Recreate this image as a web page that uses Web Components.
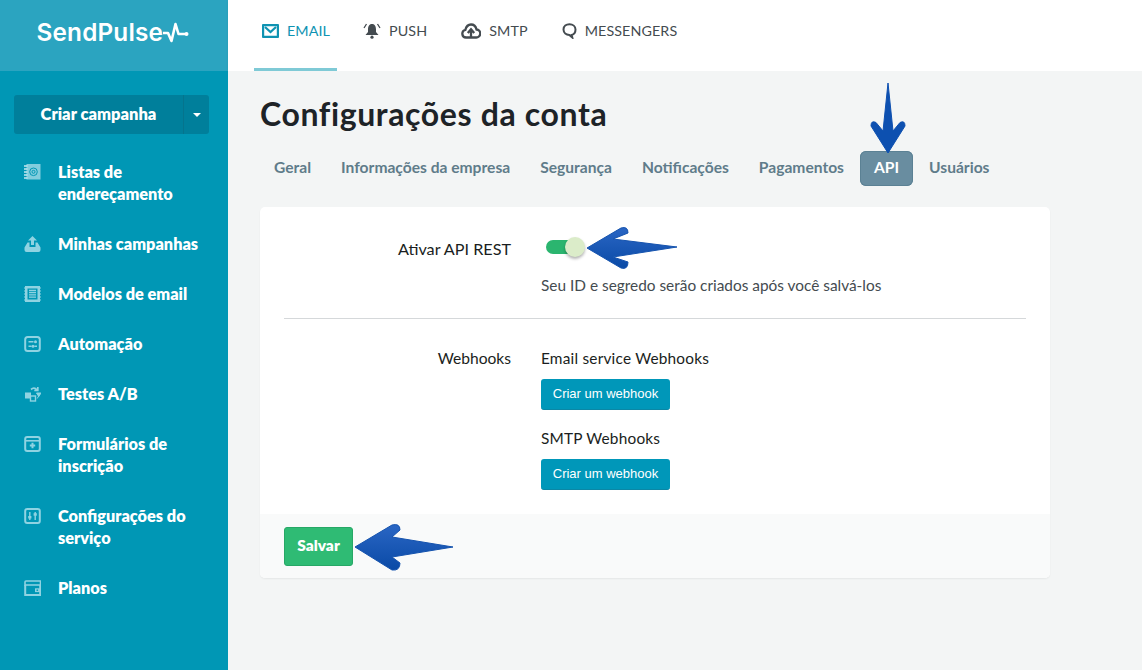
<!DOCTYPE html>
<html lang="pt"><head><meta charset="utf-8"><title>SendPulse</title>
<style>
html,body{margin:0;padding:0;height:100%}
body{font-family:Lato,"Open Sans",sans-serif;overflow:hidden;background:#f3f5f5}
app-shell{width:1142px;height:670px}
</style></head><body>
<app-shell>
  <side-bar slot="side">
    <nav-item label="Listas de endereçamento" icon="list"></nav-item>
    <nav-item label="Minhas campanhas" icon="camp"></nav-item>
    <nav-item label="Modelos de email" icon="tpl"></nav-item>
    <nav-item label="Automação" icon="auto"></nav-item>
    <nav-item label="Testes A/B" icon="ab"></nav-item>
    <nav-item label="Formulários de inscrição" icon="form"></nav-item>
    <nav-item label="Configurações do serviço" icon="conf"></nav-item>
    <nav-item label="Planos" icon="plan"></nav-item>
  </side-bar>
  <top-bar slot="top"></top-bar>
  <account-page slot="main"></account-page>
</app-shell>
<script>
const def=(n,html)=>customElements.define(n,class extends HTMLElement{
  constructor(){super();this.attachShadow({mode:'open'}).innerHTML=typeof html==='function'?html(this):html}
});
const C='#8fd3e2',B='#0097b5';
const ICONS={
 list:`<rect x="2.500" y="0" width="14" height="15.500" fill="#82cddd"/><path d="M0 2h3.500M0 5h3.500M0 8h3.500M0 11h3.500M0 14h3.500" stroke="#c4e8f0" stroke-width="1.300"/><circle cx="9.500" cy="7.800" r="3.800" fill="none" stroke="${B}" stroke-width="1"/><circle cx="9.500" cy="7.800" r="1.500" fill="none" stroke="${B}" stroke-width="1"/>`,
 camp:`<path d="M8.500 0l4.500 4.500h-3v4.500h-3v-4.500h-3z" fill="${C}"/><path d="M3.500 6.500h2v4.500h6v-4.500h2l3 5v2.500a2 2 0 0 1-2 2h-12a2 2 0 0 1-2-2v-2.500z" fill="${C}"/>`,
 tpl:`<rect x="1" y="0" width="15" height="16" fill="${C}"/><rect x="3.500" y="2.500" width="10" height="11" fill="${B}"/><path d="M5 4.500h7M5 6.700h7M5 8.900h7M5 11.100h7" stroke="${C}" stroke-width="1.300"/><path d="M0 2h2M0 5h2M0 8h2M0 11h2M0 14h2M15 2h2M15 5h2M15 8h2M15 11h2M15 14h2" stroke="${C}" stroke-width="1.100"/>`,
 auto:`<rect x="1.200" y="1" width="14.600" height="14" rx="2.500" fill="none" stroke="${C}" stroke-width="2"/><path d="M4.500 5.800h5M10.500 10.200h2.500M4.500 10.200h3" stroke="${C}" stroke-width="1.400"/><circle cx="11.500" cy="5.800" r="1.500" fill="${C}"/><circle cx="9" cy="10.200" r="1.500" fill="${C}"/>`,
 ab:`<rect x="1" y="6.500" width="6" height="6" fill="${C}"/><rect x="6.500" y="10" width="5" height="5" fill="${B}" stroke="${C}" stroke-width="1.400"/><path d="M7 3.500c2-1.800 4-1.800 6 .5M13.800 1v3.500h-3.500" fill="none" stroke="${C}" stroke-width="1.700"/><path d="M12.500 7h4.500l-2.250 3.500zM14.700 10l-1.500 2.500" fill="${C}" stroke="${C}"/>`,
 form:`<rect x="1.200" y="1" width="14.600" height="14" rx="2" fill="none" stroke="${C}" stroke-width="2"/><path d="M1.500 4.800h14" stroke="${C}" stroke-width="1.600"/><path d="M8.500 6.800v5.400M5.800 9.500h5.400" stroke="${C}" stroke-width="2"/>`,
 conf:`<rect x="1.200" y="1" width="14.600" height="14" rx="2" fill="none" stroke="${C}" stroke-width="2"/><path d="M5.800 4v8M11.200 4v8" stroke="${C}" stroke-width="1.400"/><rect x="4.200" y="8" width="3.200" height="2.500" fill="${C}"/><rect x="9.600" y="5.200" width="3.200" height="2.500" fill="${C}"/>`,
 plan:`<path d="M2 1h14.500v4h-15.500v-3a1 1 0 0 1 1-1z" fill="none" stroke="${C}" stroke-width="1.600"/><path d="M1.200 5v10h15v-10" fill="none" stroke="${C}" stroke-width="2"/><rect x="11" y="8.300" width="5.500" height="3.800" fill="${C}"/><rect x="12.500" y="9.500" width="1.600" height="1.400" fill="${B}"/>`
};
def('app-shell',`<style>:host{display:grid;grid-template-columns:228px 1fr;grid-template-rows:71px 1fr;position:relative;overflow:hidden}
 ::slotted([slot=side]){grid-row:1/3}</style>
 <slot name="side"></slot><slot name="top"></slot><slot name="main"></slot>`);
def('side-bar',`<style>:host{display:flex;flex-direction:column;background:${B};color:#fff;height:670px}
 .logo{height:71px;background:#2ba4c0;display:flex;align-items:center;padding-left:36.500px;box-sizing:border-box;font:600 24.300px/1 "Inter",Lato,sans-serif;letter-spacing:.2px;padding-bottom:7px;flex:none}
 .logo svg{flex:none;margin-top:2px}
 .cta{margin:24px 19px 13px 14px;height:39px;display:flex;background:#007f9b;border-radius:3px;font:800 16.500px/38px Lato,sans-serif}
 .cta b{flex:1;text-align:center;font-weight:800}
 .cta i{width:26px;border-left:1px solid #05748d;position:relative;box-sizing:border-box}
 .cta i:after{content:"";position:absolute;left:9px;top:18px;border:4px solid transparent;border-top-color:#fff;border-bottom:0}
 </style><div class="logo"><span>SendPulse</span><svg width="26" height="22" viewBox="0 0 26 22" fill="none" stroke="#fff" stroke-width="2.600" stroke-linejoin="round"><path d="M0 11h5l3.500 8 4-17 3 10h7"/><circle cx="23.500" cy="12" r="2" fill="#fff" stroke="none"/></svg></div>
 <div class="cta"><b>Criar campanha</b><i></i></div><slot></slot>`);
def('nav-item',h=>`<style>:host{display:flex;padding:14px 20px 14px 24px;font:800 16.300px/22px Lato,sans-serif;color:#fff;gap:17px;align-items:flex-start}
 svg{flex:none;margin-top:3px;width:17px;height:16px}</style>
 <svg viewBox="0 0 17 16">${ICONS[h.getAttribute('icon')]}</svg><span>${h.getAttribute('label')}</span>`);
def('top-bar',`<style>:host{display:flex;background:#fff;height:71px;padding-left:26px;box-shadow:0 1px 2px rgba(0,0,0,.08);position:relative;align-items:stretch;font:400 14.300px/1 Lato,sans-serif;color:#444b50}
 a{display:flex;align-items:center;gap:8px;padding:0 9px 9px;box-sizing:border-box;margin-left:16px;letter-spacing:.1px}
 svg{flex:none}
 .on{margin-left:0;color:#0f93b2;border-bottom:3px solid #7fcad6;padding:0 0 6px 8px;width:83px;white-space:nowrap}
 .p{margin-left:17px}
 </style>
 <a class="on"><svg width="17" height="14" viewBox="0 0 17 14"><rect x="1" y="1" width="15" height="12" rx="1" fill="none" stroke="#0f93b2" stroke-width="2.400"/><path d="M3 3l5.500 5 5.500-5" fill="none" stroke="#0f93b2" stroke-width="2.200"/></svg>EMAIL</a>
 <a class="p"><svg width="18" height="16" viewBox="0 0 18 16" fill="#444b50"><path d="M9 1c3 0 4 2.500 4 5.500v2.500l2.500 3H2.500L5 9V6.500C5 3.500 6 1 9 1z"/><circle cx="9" cy="14.200" r="1.600"/><path d="M3.500 1L1 5M14.500 1L17 5" stroke="#444b50" stroke-width="1.300" fill="none"/></svg>PUSH</a>
 <a><svg width="20" height="16" viewBox="0 0 20 16"><path d="M5 14.500a3.800 3.800 0 0 1-.7-7.500c.8-3 3-5.500 5.700-5.500s4.900 2.300 5.500 5a4 4 0 0 1-.5 8z" fill="none" stroke="#444b50" stroke-width="2.300"/><path d="M10 15V8M6.800 10l3.200-3.800L13.200 10" fill="none" stroke="#444b50" stroke-width="2.300"/></svg>SMTP</a>
 <a><svg width="15" height="16" viewBox="0 0 15 16"><path d="M7.500 1.200c3.300 0 6 2.200 6 5.300s-2 5-3.800 5.400l.6 2.600-3-2.500c-3-.2-5.800-2.200-5.800-5.500s2.700-5.300 6-5.300z" fill="none" stroke="#444b50" stroke-width="2"/></svg>MESSENGERS</a>`);
def('tab-bar',`<style>:host{display:flex;height:35px;font:700 15.600px/33px Lato,sans-serif;color:#5f7c8a}</style><slot></slot>`);
def('tab-item',`<style>:host{display:block;height:35px;padding:0 14px;margin-right:2px;border-radius:6px}
 :host([active]){background:#698da0;color:#fff;box-shadow:inset 0 0 0 1px #5b8194}</style><slot></slot>`);
def('form-row',h=>`<style>:host{display:grid;grid-template-columns:227px 1fr;column-gap:30px;font:400 15.600px/20px Lato,sans-serif;color:#1a1e21}
 :host([wide]) .l{font-size:16.200px;line-height:19px}
 .l{text-align:right;white-space:nowrap}</style><div class="l">${h.getAttribute('label')}</div><div><slot></slot></div>`);
def('toggle-switch',`<style>:host{display:block;width:38px;height:20px;position:relative;margin:-2px 0 0 5px}
 .t{position:absolute;left:0;top:3px;width:34px;height:14px;border-radius:7px;background:#2bb56f}
 .k{position:absolute;left:19px;top:0;width:20px;height:20px;border-radius:50%;background:#dbecc9;box-shadow:0 2px 3px rgba(0,0,0,.3)}</style><div class="t"></div><div class="k"></div>`);
def('ui-button',`<style>:host{display:block;width:129px;box-sizing:border-box;text-align:center;background:#0097b9;color:#fff;border-radius:3px;border-bottom:1px solid #0b87a5;font:400 13px/29px "Liberation Sans",sans-serif;height:31px}
 :host([ok]){width:69px;background:#2fbb74;border:1px solid #27a866;font:800 15.500px/35px Lato,sans-serif;height:39px}</style><slot></slot>`);
def('account-page',`<style>:host{display:block;padding:22px 32px 0;position:relative;background:#f3f5f5;height:599px;box-sizing:border-box}
 h1{margin:0 0 17px;font:700 32px/41px Lato,sans-serif;color:#1d2327;letter-spacing:.62px;height:41px}
 .card{margin-top:21px;width:790px;height:371px;background:#fff;border-radius:5px;box-shadow:0 1px 2px rgba(0,0,0,.06);display:flex;flex-direction:column;overflow:hidden}
 .body{flex:1;padding:32px 24px 0}
 .hint{margin:18px 0 0;color:#444b50;white-space:nowrap;font-size:15.400px}
 hr{border:0;border-top:1px solid #d5d8da;margin:23px 0 29px}
 h4{margin:0 0 11px;font:400 15.400px/20px Lato,sans-serif;letter-spacing:.2px}
 h4.b{margin-top:18px}
 .foot{height:64px;background:#f9fafa;padding:13px 24px;box-sizing:border-box;flex:none}
 svg.a{position:absolute;overflow:visible}
 </style>
 <h1>Configurações da conta</h1>
 <tab-bar><tab-item>Geral</tab-item><tab-item>Informações da empresa</tab-item><tab-item>Segurança</tab-item><tab-item>Notificações</tab-item><tab-item>Pagamentos</tab-item><tab-item active>API</tab-item><tab-item>Usuários</tab-item></tab-bar>
 <div class="card"><div class="body">
  <form-row wide label="Ativar API REST"><toggle-switch></toggle-switch><p class="hint">Seu ID e segredo serão criados após você salvá-los</p></form-row>
  <hr>
  <form-row label="Webhooks"><h4>Email service Webhooks</h4><ui-button>Criar um webhook</ui-button><h4 class="b">SMTP Webhooks</h4><ui-button>Criar um webhook</ui-button></form-row>
 </div><div class="foot"><ui-button ok>Salvar</ui-button></div></div>
 <svg class="a" style="left:0;top:0" width="914" height="599" viewBox="228 71 914 599">
  <defs><linearGradient id="g" x1="0" y1="0" x2="0" y2="1"><stop offset="0" stop-color="#2a66c4"/><stop offset="1" stop-color="#0a4aa6"/></linearGradient></defs>
  <path d="M888 83L893 131L900 122.500Q905 120 905 126L888 153L871 126Q871 120 876 122.500L883 131Z" fill="#0d50b0" stroke="#0d50b0" stroke-width="1" stroke-linejoin="round"/>
  <path d="M587 248L621 228Q628 226 628 233L613 239L677 247L613 257L628 262Q628 270 621 268Z" fill="url(#g)" stroke="#1553ae" stroke-width="1" stroke-linejoin="round"/>
  <path d="M355 547L392 525Q400 523 400 530L392 537L453 547L392 557L400 563Q400 571 392 570Z" fill="url(#g)" stroke="#1553ae" stroke-width="1" stroke-linejoin="round"/>
 </svg>`);
</script>
</body></html>
